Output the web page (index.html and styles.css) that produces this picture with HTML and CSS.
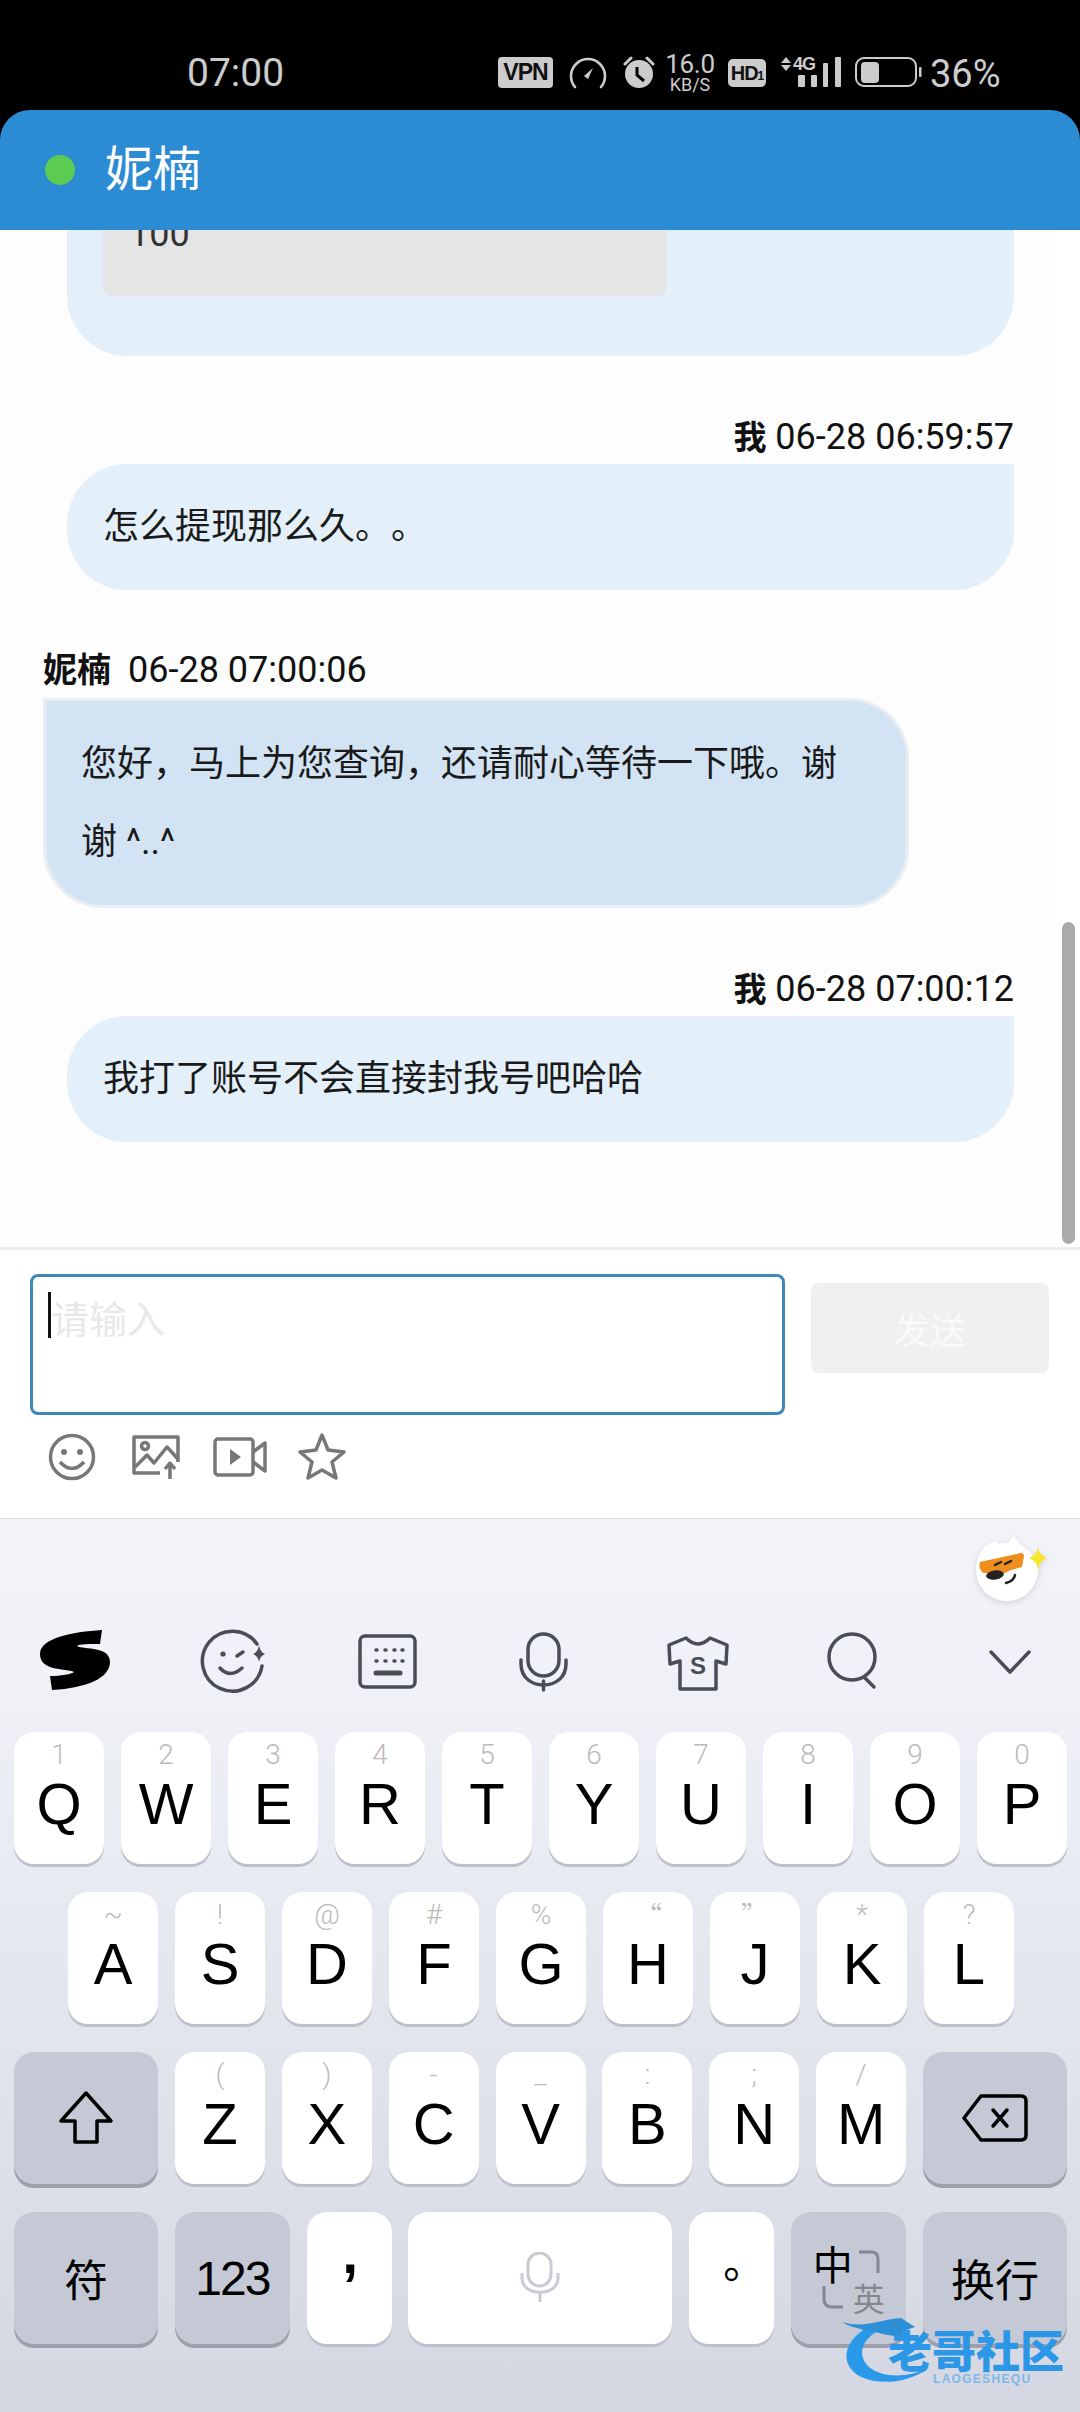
FILE: index.html
```html
<!DOCTYPE html>
<html lang="zh-CN">
<head>
<meta charset="utf-8">
<title>妮楠</title>
<link rel="stylesheet" href="styles.css">
</head>
<body>
<div class="phone">
  <div class="status">
    <span class="clock">07:00</span>
    <div class="status-icons">
      <span class="vpn">VPN</span>
      <svg class="st-speed" width="38" height="32" viewBox="0 0 38 32"><path d="M6 30A17 17 0 1 1 32 30" fill="none" stroke="#ccc" stroke-width="2.6" stroke-linecap="round"/><path d="M24 11L19 22 15 19Z" fill="#ccc"/></svg>
      <svg class="st-alarm" width="32" height="34" viewBox="0 0 32 34"><circle cx="16" cy="19" r="14" fill="#ccc"/><path d="M14 12V20L21 26" fill="none" stroke="#000" stroke-width="3"/><path d="M2 9L8 3M30 9L24 3" stroke="#ccc" stroke-width="3" stroke-linecap="round"/></svg>
      <div class="speed"><span class="speed-num">16.0</span><span class="speed-unit">KB/S</span></div>
      <span class="hd">HD<small>1</small></span>
      <svg class="st-signal" width="62" height="34" viewBox="0 0 62 34"><path d="M5 2L10 8H0ZM5 16L0 10H10Z" fill="#ccc"/><text x="12" y="15" class="st-4g">4G</text><rect x="17" y="20" width="7" height="12" rx="1" fill="#ccc"/><rect x="30" y="20" width="6" height="12" rx="1" fill="#ccc"/><rect x="42" y="8" width="5" height="24" rx="1" fill="#ccc"/><rect x="54" y="2" width="6" height="30" rx="1" fill="#ccc"/></svg>
      <svg class="st-batt" width="68" height="32" viewBox="0 0 68 32"><rect x="1" y="2" width="60" height="28" rx="8" fill="none" stroke="#ccc" stroke-width="2"/><rect x="6" y="6" width="18" height="21" rx="4" fill="#ccc"/><rect x="64" y="11" width="2.5" height="10" rx="1" fill="#ccc"/></svg>
      <span class="pct">36%</span>
    </div>
  </div>

  <header class="head">
    <span class="dot"></span>
    <span class="name">妮楠</span>
  </header>

  <main class="chat">
    <div class="scroll">
      <div class="bubble bubble-me bubble-first"><div class="quote">100</div></div>

      <div class="meta meta-me"><b>我</b> 06-28 06:59:57</div>
      <div class="bubble bubble-me">怎么提现那么久。。</div>

      <div class="meta meta-agent"><b>妮楠</b><span class="time">06-28 07:00:06</span></div>
      <div class="bubble bubble-agent">您好，马上为您查询，还请耐心等待一下哦。谢谢 ^..^</div>

      <div class="meta meta-me"><b>我</b> 06-28 07:00:12</div>
      <div class="bubble bubble-me">我打了账号不会直接封我号吧哈哈</div>
    </div>
    <div class="thumb"></div>
  </main>

  <section class="composer">
    <div class="composer-row">
      <div class="input"><span class="caret"></span><span class="placeholder">请输入</span></div>
      <button class="send">发送</button>
    </div>
    <div class="tools">
      <svg width="48" height="50" viewBox="0 0 48 50"><circle cx="24" cy="25" r="21.5" class="ti"/><circle cx="16" cy="20" r="3" fill="#777"/><circle cx="32" cy="20" r="3" fill="#777"/><path d="M12 30Q24 43 36 30" class="ti"/></svg>
      <svg width="48" height="50" viewBox="0 0 48 50"><path d="M28 41H2V5H46V30" class="ti"/><circle cx="13" cy="14" r="3.5" class="ti"/><path d="M3 35L15 23 22 31 35 15 46 27" class="ti"/><path d="M38 47V31M33 37L38 31 43 37" class="ti"/></svg>
      <svg width="54" height="50" viewBox="0 0 54 50"><rect x="2" y="7" width="38" height="36" rx="3" class="ti"/><path d="M17 17L28 25 17 33Z" fill="#777"/><path d="M40 20L52 11V39L40 30" class="ti"/></svg>
      <svg width="48" height="50" viewBox="0 0 48 50"><path d="M24 3L30 18 46 20 34 30 38 46 24 38 10 46 14 30 2 20 18 18Z" class="ti"/></svg>
    </div>
  </section>

  <section class="kb">
    <svg class="mascot" width="76" height="70" viewBox="0 0 76 70">
      <path d="M5 20L10 12 20 7 24 10Q30 8 33 9L39 2 46 11Q63 22 63 36A31 31 0 1 1 1 36Q1 27 5 20Z" fill="#fff"/>
      <path d="M5 28L46 19Q49 19 49 22L47 33 36 36 30 39 8 39Q3 34 5 28Z" fill="#ef8d1f"/>
      <ellipse cx="20" cy="41" rx="9" ry="4.500" fill="#222" transform="rotate(-8 20 41)"/>
      <path d="M20 31L26 28M30 30L36 27" stroke="#222" stroke-width="2.500" stroke-linecap="round"/>
      <path d="M40 41Q39 47 31 49" fill="none" stroke="#222" stroke-width="2.500" stroke-linecap="round"/>
      <path d="M63 13Q64 21 72 24Q64 27 63 36Q62 27 54 24Q62 21 63 13Z" fill="#f8e62a"/>
    </svg>

    <div class="kb-tools">
      <svg width="76" height="70" viewBox="0 0 76 70"><path d="M65 4L63 18C52 18 42 18 40 20C48 24 73 20 73 36C73 52 50 62 15 64L13 50C24 50 35 48 37 46C30 42 3 46 3 28C3 12 35 6 65 4Z" fill="#000"/></svg>
      <svg class="tb-face" width="76" height="70" viewBox="0 0 76 70"><path d="M62 18A30 30 0 1 0 67 40" class="tb"/><circle cx="28" cy="28" r="2.6" fill="#4a4d55"/><path d="M42 30L48 26" class="tb"/><path d="M25 42Q35 53 47 42" class="tb"/><path d="M64 19Q65 26 70 28Q65 30 64 36Q63 30 58 28Q63 26 64 19Z" fill="#4a4d55"/></svg>
      <svg width="76" height="70" viewBox="0 0 76 70"><rect x="10" y="10" width="55" height="51" rx="5" class="tb"/><path d="M26 24h1M35 24h1M44 24h1M53 24h-1M26 35h1M35 35h1M44 35h1M53 35h-1" class="tb"/><path d="M26 47H50" class="tb tb-heavy"/></svg>
      <svg width="76" height="70" viewBox="0 0 76 70"><rect x="22" y="8" width="31" height="42" rx="15.5" class="tb"/><path d="M15 34V38C15 66 60 66 60 38V34" class="tb"/><path d="M37.500 55V64" class="tb"/></svg>
      <svg width="76" height="70" viewBox="0 0 76 70"><path d="M25 12L8 19 9 38 19 35V63H55V35L65 38 66 19 49 12Q37 24 25 12Z" class="tb"/><text x="37" y="48" class="shirt-s">S</text></svg>
      <svg width="76" height="70" viewBox="0 0 76 70"><circle cx="35" cy="31" r="23" class="tb"/><path d="M47 51L57 61" class="tb"/></svg>
      <svg width="76" height="70" viewBox="0 0 76 70"><path d="M19 26L38 46 57 26" class="tb"/></svg>
    </div>

    <div class="row row-1">
      <div class="key"><span class="sub">1</span><span class="main">Q</span></div>
      <div class="key"><span class="sub">2</span><span class="main">W</span></div>
      <div class="key"><span class="sub">3</span><span class="main">E</span></div>
      <div class="key"><span class="sub">4</span><span class="main">R</span></div>
      <div class="key"><span class="sub">5</span><span class="main">T</span></div>
      <div class="key"><span class="sub">6</span><span class="main">Y</span></div>
      <div class="key"><span class="sub">7</span><span class="main">U</span></div>
      <div class="key"><span class="sub">8</span><span class="main">I</span></div>
      <div class="key"><span class="sub">9</span><span class="main">O</span></div>
      <div class="key"><span class="sub">0</span><span class="main">P</span></div>
    </div>
    <div class="row row-2">
      <div class="key"><span class="sub">~</span><span class="main">A</span></div>
      <div class="key"><span class="sub">!</span><span class="main">S</span></div>
      <div class="key"><span class="sub">@</span><span class="main">D</span></div>
      <div class="key"><span class="sub">#</span><span class="main">F</span></div>
      <div class="key"><span class="sub">%</span><span class="main">G</span></div>
      <div class="key"><span class="sub sub-q">“</span><span class="main">H</span></div>
      <div class="key"><span class="sub sub-q">”</span><span class="main">J</span></div>
      <div class="key"><span class="sub">*</span><span class="main">K</span></div>
      <div class="key"><span class="sub">?</span><span class="main">L</span></div>
    </div>
    <div class="row row-3">
      <div class="key key-fn key-wide"><svg width="60" height="56" viewBox="0 0 60 56"><path d="M30 3L55 31H41V52H19V31H5Z" fill="none" stroke="#000" stroke-width="3.500" stroke-linejoin="round"/></svg></div>
      <div class="key"><span class="sub">(</span><span class="main">Z</span></div>
      <div class="key"><span class="sub">)</span><span class="main">X</span></div>
      <div class="key"><span class="sub">-</span><span class="main">C</span></div>
      <div class="key"><span class="sub">_</span><span class="main">V</span></div>
      <div class="key"><span class="sub">:</span><span class="main">B</span></div>
      <div class="key"><span class="sub">;</span><span class="main">N</span></div>
      <div class="key"><span class="sub">/</span><span class="main">M</span></div>
      <div class="key key-fn key-wide"><svg width="68" height="50" viewBox="0 0 68 50"><path d="M20 3H60Q65 3 65 8V42Q65 47 60 47H20L3 25Z" fill="none" stroke="#000" stroke-width="3.500" stroke-linejoin="round"/><path d="M32 17L46 33M46 17L32 33" stroke="#000" stroke-width="3.500" stroke-linecap="round"/></svg></div>
    </div>
    <div class="row row-4">
      <div class="key key-fn key-wide key-zh">符</div>
      <div class="key key-fn key-123">123</div>
      <div class="key key-punct key-comma">,</div>
      <div class="key key-space"><svg width="40" height="52" viewBox="0 0 40 52"><rect x="8" y="1" width="23" height="33" rx="11.500" fill="none" stroke="#c9cbd3" stroke-width="3"/><path d="M2 21V26C2 45 38 45 38 26V21M20 41V50" fill="none" stroke="#c9cbd3" stroke-width="3"/></svg></div>
      <div class="key key-punct key-period">。</div>
      <div class="key key-fn key-lang">
        <span class="lang-zh">中</span>
        <svg width="24" height="26" viewBox="0 0 24 26"><path d="M2 2H14Q21 2 21 9V23" fill="none" stroke="#85868f" stroke-width="3"/></svg>
        <svg width="24" height="26" viewBox="0 0 24 26"><path d="M3 2V15Q3 23 11 23H22" fill="none" stroke="#85868f" stroke-width="3"/></svg>
        <span class="lang-en">英</span>
      </div>
      <div class="key key-fn key-wide key-zh">换行</div>
    </div>
  </section>

  <svg class="watermark" width="224" height="72" viewBox="0 0 224 72">
    <path d="M22 12C5 22 -2 40 8 52C18 66 55 72 85 52C60 62 35 60 24 48C14 36 20 22 35 14Z" fill="#2a99ea"/>
    <path d="M0 5C20 12 40 2 58 1L72 10 60 14 68 22 45 18C35 16 25 12 22 14C15 10 5 10 0 5Z" fill="#2d8fd6"/>
    <text x="45" y="51" class="wm-title">老哥社区</text>
    <text x="90" y="66" class="wm-sub">LAOGESHEQU</text>
  </svg>
</div>
</body>
</html>
```

FILE: styles.css
```css
* { box-sizing: border-box; }
html, body { margin: 0; padding: 0; }
body {
  width: 1080px;
  height: 2412px;
  overflow: hidden;
  background: #000;
  font-family: Roboto, "Noto Sans CJK SC", sans-serif;
  color: #111;
  text-spacing-trim: space-all;
}
.phone { position: relative; width: 1080px; height: 2412px; display: flex; flex-direction: column; }

/* status bar */
.status { height: 110px; background: #000; display: flex; padding: 53px 0 0 187px; color: #ccc; }
.clock { font-size: 39px; line-height: 40px; font-weight: 400; width: 311px; }
.status-icons { display: flex; align-items: flex-start; height: 40px; }
.vpn { width: 55px; height: 31px; margin-top: 4px; background: #ccc; color: #111; border-radius: 4px; font: 700 23px/31px "Liberation Sans", sans-serif; text-align: center; letter-spacing: -1px; }
.st-speed { margin: 4px 0 0 16px; }
.st-alarm { margin: 2px 0 0 16px; }
.speed { margin-left: 10px; width: 50px; display: flex; flex-direction: column; align-items: center; }
.speed-num { font-size: 26px; line-height: 23px; letter-spacing: -0.3px; }
.speed-unit { font-size: 18px; line-height: 18px; }
.hd { width: 38px; height: 28px; margin: 6px 0 0 13px; background: #ccc; color: #111; border-radius: 5px; font: 700 20px/28px "Liberation Sans", sans-serif; text-align: center; letter-spacing: -1px; }
.hd small { font-size: 12px; }
.st-signal { margin: 2px 0 0 15px; }
.st-4g { font: 700 18px "Liberation Sans", sans-serif; fill: #ccc; letter-spacing: -1px; }
.st-batt { margin: 3px 0 0 12px; }
.pct { margin-left: 7px; font-size: 38px; line-height: 42px; font-weight: 400; }

/* header */
.head { height: 120px; background: #2b8cd3; border-radius: 30px 30px 0 0; display: flex; align-items: center; padding: 0 0 0 45px; flex: none; position: relative; z-index: 2; }
.dot { width: 30px; height: 30px; border-radius: 50%; background: #5ccb52; }
.name { margin-left: 30px; font-size: 48px; line-height: 60px; color: #fff; font-weight: 400; }

/* chat */
.chat { height: 1017px; background: #fff; position: relative; overflow: hidden; flex: none; }
.scroll { width: 1056px; height: 1017px; background: #fdfdfd; padding: 0 42px 0 0; overflow: hidden; }
.bubble { font-size: 36px; line-height: 78px; padding: 24px 36px; color: #1a1a1a; }
.bubble-me { margin-left: 67px; background: #e4f0f9; border-radius: 60px 0 60px 60px; }
.bubble-first { margin-top: -80px; padding: 0 0 60px 36px; height: 206px; border-radius: 0 0 60px 60px; }
.quote { width: 563px; height: 146px; background: #e5e5e5; border-radius: 0 0 8px 8px; padding: 45px 0 0 26px; line-height: 78px; font-size: 36px; color: #333; }
.meta { font-size: 36px; height: 53px; line-height: 53px; margin-top: 55px; color: #111; white-space: nowrap; }
.meta b { font-weight: 700; font-size: 33px; }
.meta-me { text-align: right; margin-left: 67px; }
.meta-agent { margin-left: 43px; margin-top: 54px; height: 54px; }
.meta-agent b { font-size: 34px; }
.time { margin-left: 17px; }
.bubble-agent { margin: 0 105px 0 43px; background: #d2e4f3; border: 3px solid #e9eef2; border-radius: 0 60px 60px 60px; padding: 24px 35px; }
.thumb { position: absolute; left: 1062px; top: 692px; width: 13px; height: 322px; border-radius: 7px; background: #aaa; }

/* composer */
.composer { height: 272px; flex: none; background: #fff; border-top: 3px solid #eee; border-bottom: 1px solid #ddd; padding: 24px 0 0 30px; }
.composer-row { display: flex; align-items: flex-start; }
.input { width: 755px; height: 141px; border: 3px solid #3f87b8; border-radius: 8px; padding: 15px 0 0 15px; display: flex; align-items: flex-start; }
.caret { width: 3px; height: 46px; background: #111; flex: none; }
.placeholder { font-size: 38px; line-height: 46px; margin-top: 5px; color: #e8e8e8; }
.send { width: 238px; height: 90px; margin: 9px 0 0 26px; border: 0; background: #f0f0f0; border-radius: 8px; color: #fafafa; font: 36px "Noto Sans CJK SC", sans-serif; }
.tools { display: flex; gap: 33px; margin: 17px 0 0 18px; }
.tools svg:nth-child(2) { margin-left: 3px; }
.tools svg:nth-child(4) { margin-left: -2px; }
.ti { fill: none; stroke: #777; stroke-width: 3.500; stroke-linejoin: round; }

/* keyboard */
.kb { flex: 1; position: relative; background: linear-gradient(#f1f3f8, #eff1f7 20%, #d4d7e1 100%); padding-top: 107px; }
.mascot { position: absolute; left: 975px; top: 15px; filter: drop-shadow(0 2px 3px rgba(0,0,0,.12)); }
.kb-tools { display: flex; justify-content: space-between; height: 70px; padding: 0 32px 0 37px; margin-bottom: 36px; }
.tb-face { margin-left: 2px; }
.tb { fill: none; stroke: #4a4d55; stroke-width: 3.500; stroke-linecap: round; stroke-linejoin: round; }
.tb-heavy { stroke-width: 5; }
.shirt-s { font: 700 24px "Liberation Sans", sans-serif; fill: #4a4d55; text-anchor: middle; }
.row { display: flex; height: 132px; margin-bottom: 28px; padding: 0 13px 0 14px; }
.row-1 { gap: 17px; }
.row-2 { gap: 17px; padding-left: 68px; }
.row-3, .row-4 { justify-content: space-between; }
.key { width: 90px; height: 132px; background: #fff; border-radius: 20px; box-shadow: 0 3px 0 #bdbfca; display: flex; flex-direction: column; align-items: center; padding-top: 8px; color: #000; font-family: "Liberation Sans", sans-serif; flex: none; }
.sub { font-size: 28px; line-height: 30px; height: 30px; color: #bbb; font-family: Roboto, sans-serif; font-weight: 300; }
.sub-q { font-family: "Noto Sans CJK SC", sans-serif; }
.main { font-size: 58px; line-height: 58px; margin-top: 5px; }
.key-fn { background: #c5c9d5; box-shadow: 0 4px 0 #9c9fac; justify-content: center; padding-top: 0; }
.key-wide { width: 144px; }
.key-zh { font: 44px "Noto Sans CJK SC", sans-serif; }
.key-123 { width: 115px; font-size: 48px; letter-spacing: -2px; }
.key-punct { width: 85px; }
.key-comma { font: 700 57px/60px "Liberation Sans", sans-serif; padding: 11px 0 0 2px; }
.key-period { font: 42px/42px "Noto Sans CJK SC", sans-serif; padding: 27px 0 0 25px; }
.key-space { width: 264px; justify-content: center; padding-top: 0; }
.key-lang { width: 115px; display: grid; grid-template-columns: 40px 32px; grid-template-rows: 38px 30px; justify-content: center; align-content: center; justify-items: center; align-items: center; }
.lang-zh { font: 40px/38px "Noto Sans CJK SC", sans-serif; color: #000; }
.lang-en { font: 32px/30px "Noto Sans CJK SC", sans-serif; color: #85868f; }

/* watermark */
.watermark { position: absolute; left: 843px; top: 2317px; }
.wm-title { font: 900 44px "Noto Sans CJK SC", sans-serif; fill: #2b97e6; }
.wm-sub { font: 700 12px "Liberation Sans", sans-serif; fill: #7db8e6; letter-spacing: 1.300px; }
```
